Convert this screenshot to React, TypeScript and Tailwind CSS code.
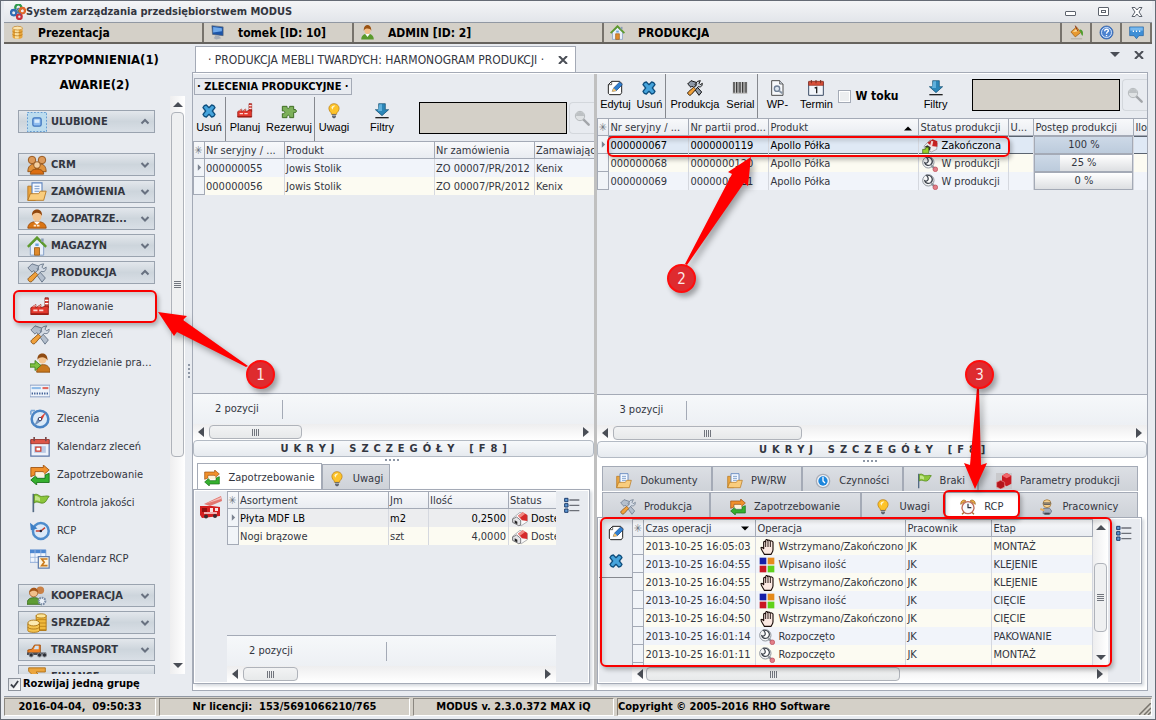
import type { ReactNode } from "react";

type IconName = keyof typeof art;

const art = {
  logo: (
    <g fill="none" strokeWidth="3.500">
      <path d="M9 8a4.500 4.500 0 1 1 8-3c0 3-3 4-5 7" stroke="#2f9a4c" />
      <circle cx="5.500" cy="13" r="4" stroke="#2f6db5" />
      <circle cx="18.500" cy="10" r="4" stroke="#e0662a" />
      <circle cx="14" cy="19" r="3.500" stroke="#c8323c" />
      <path d="M9 11l7 4M13 6l-5 6" stroke="#4a6fa5" strokeWidth="2" />
    </g>
  ),
  db: (
    <g>
      <path d="M4 5v14c0 4 16 4 16 0V5z" fill="#e8a53a" />
      <path d="M8 7v14c2 1 5 1 6 0V7z" fill="#fbe0a0" />
      <ellipse cx="12" cy="5" rx="8" ry="3" fill="#fbe5b0" stroke="#b9781c" />
      <path d="M4 10c2 3 14 3 16 0M4 15c2 3 14 3 16 0" fill="none" stroke="#a9690f" />
    </g>
  ),
  monitor: (
    <g>
      <path d="M3 1l18 2v14L4 15z" fill="#1d55a8" stroke="#59626f" />
      <path d="M5 3l14 2v5L5 12z" fill="#6fa9ea" />
      <path d="M9 16l5 1 4 4-8 2-4-2z" fill="#a7adb5" />
    </g>
  ),
  user: (
    <g>
      <path d="M2 23c0-6 4-9 10-9s10 3 10 9z" fill="#5a9a2c" />
      <path d="M8 14l4 5 4-5z" fill="#fff" />
      <ellipse cx="12" cy="8" rx="5" ry="6.500" fill="#f2bd87" />
      <path d="M6 9c-1-12 13-12 12 0-1-4-10-5-12 0z" fill="#9a5212" />
    </g>
  ),
  house: (
    <g>
      <path d="M4 11v12h16V11l-8-7z" fill="#e9f0fa" stroke="#7694c0" />
      <path d="M1 13L12 2l11 11" fill="none" stroke="#5e9a2e" strokeWidth="3" />
      <path d="M17 3h3v4h-3z" fill="#8a9bb5" />
      <path d="M9 14h6v9H9z" fill="#e08a2c" stroke="#9b5a12" />
      <path d="M10 9h4v3h-4z" fill="#6aa5dd" />
    </g>
  ),
  bucket: (
    <g>
      <path d="M3 21h18v2H3z" fill="#b8b4aa" />
      <path d="M3 11l9-8 7 9-9 7z" fill="#e89a30" stroke="#8e5410" />
      <path d="M6 11l6-5 3 4z" fill="#fde1a2" />
      <path d="M10 1l4 9" stroke="#8a2f12" strokeWidth="1.500" />
      <path d="M17 7c5 0 6 4 5 10-3 0-2-6-5-7z" fill="#4e9c2a" />
    </g>
  ),
  help: (
    <g>
      <circle cx="12" cy="12" r="10.500" fill="#4b82d0" stroke="#23549b" />
      <circle cx="12" cy="12" r="8" fill="none" stroke="#dce9fb" strokeWidth="1.500" />
      <path d="M9 10c0-4 6-4 6-1 0 2-3 2-3 5M12 16v2" fill="none" stroke="#fff" strokeWidth="2.200" />
    </g>
  ),
  chat: (
    <g>
      <path d="M1 3h22v14h-7l-4 5-4-5H1z" fill="#3f8fd6" stroke="#1f5f9f" />
      <path d="M2 4h20v5H2z" fill="#79b9ee" />
      <path d="M6 10h2M11 10h2M16 10h2" stroke="#fff" strokeWidth="2.500" />
    </g>
  ),
  remove: (
    <path
      d="M5 4l3-1 4 4 4-4 3 1 2 3-4 5 4 5-2 3-3 1-4-4-4 4-3-1-2-3 4-5-4-5z"
      fill="#46a4dc"
      stroke="#0f4f7e"
      strokeWidth="2"
      strokeLinejoin="round"
    />
  ),
  factory: (
    <g>
      <path d="M18 1h4v12h-4z" fill="#e0473c" stroke="#8f1a12" />
      <path d="M18 4h4M18 8h4" stroke="#fff" strokeWidth="1.500" />
      <path d="M1 21V13l6-4v4l6-4v4l5-2h4v10z" fill="#e2382d" stroke="#8f1a12" />
      <path d="M2 12l5-3v2zM9 12l4-3v2z" fill="#f7b3ab" />
      <path d="M4 16h5M11 16h5" stroke="#fbd7d2" strokeWidth="2" />
      <path d="M1 20.500h21" stroke="#9c1d15" strokeWidth="2" />
    </g>
  ),
  puzzle: (
    <path
      d="M2 5h7c-1 4 5 4 4 0h6v5c5-2 6 6 0 4v8h-6c1-5-5-5-4 0H2v-6c5 1 5-5 0-4z"
      fill="#7db05a"
      stroke="#3f6e25"
      strokeWidth="1.500"
    />
  ),
  bulb: (
    <g>
      <path d="M8 15C1 9 5 1 12 1s11 8 4 14v2H8z" fill="#fdc32a" stroke="#b3770b" />
      <path d="M8 7c1-3 4-4 6-3-2 1-4 3-4 6z" fill="#fff7cc" />
      <path d="M9 17h6v4l-2 2h-2l-2-2z" fill="#5a5f69" />
      <path d="M9 19h6" stroke="#dfe3ea" />
    </g>
  ),
  download: (
    <g>
      <path d="M7 1h10v9h5L12 19 2 10h5z" fill="#2b86b8" stroke="#124c6e" />
      <path d="M8 2h4v10H6z" fill="#5fb0dc" />
      <path d="M2 22h20" stroke="#222" strokeWidth="2" />
    </g>
  ),
  search: (
    <g>
      <path d="M14 14l8 8" stroke="#a2a5a9" strokeWidth="3.500" strokeLinecap="round" />
      <circle cx="9" cy="9" r="7" fill="#dfe2e4" stroke="#b6babd" strokeWidth="1.500" />
      <path d="M3 9a6 6 0 0 1 12 0z" fill="#bdc1c4" />
    </g>
  ),
  edit: (
    <g>
      <path d="M7 2h12l3 3v14l-2 3H4l-2-2V7z" fill="#fff" stroke="#222" strokeWidth="1.500" />
      <path d="M7 2v5H2" fill="none" stroke="#222" />
      <path d="M8 17l2-5L19 3l4 4-9 9z" fill="#2f7fd0" stroke="#123f78" />
      <path d="M7 18l3-6 4 4z" fill="#f5c06a" />
    </g>
  ),
  tools: (
    <g>
      <path d="M1 6l5-5 9 3-3 3 10 11-4 5L8 9 6 11z" fill="#b4bfcd" stroke="#5d6c80" />
      <path d="M16 2l4-1-2 4 2 2 3-2c0 5-3 6-6 5L6 22c-3 2-6-2-4-4L14 8c-1-3 0-5 2-6z" fill="#d5dce6" stroke="#5d6c80" />
      <path d="M2 18l8-7 3 3-7 8c-3 2-6-2-4-4z" fill="#f0a13c" stroke="#9d5c12" />
    </g>
  ),
  toolsDark: (
    <g>
      <path d="M1 6l5-5 9 3-3 3 10 11-4 5L8 9 6 11z" fill="#8e99a8" stroke="#111" strokeWidth="1.500" />
      <path d="M16 2l4-1-2 4 2 2 3-2c0 5-3 6-6 5L6 22c-3 2-6-2-4-4L14 8c-1-3 0-5 2-6z" fill="#ced6e0" stroke="#111" strokeWidth="1.500" />
      <path d="M2 18l8-7 3 3-7 8c-3 2-6-2-4-4z" fill="#f0a13c" stroke="#4c2c08" />
    </g>
  ),
  barcode: (
    <g>
      <path d="M1 3h22v18H1z" fill="#c4c4c4" />
      <path d="M3 3v16M7 3v16M12 3v16M16 3v16M21 3v16" stroke="#3b3b3b" strokeWidth="2" />
      <path d="M9.500 3v16M18.500 3v16" stroke="#777" />
    </g>
  ),
  docGear: (
    <g>
      <path d="M4 1h12l5 5v17H4z" fill="#f6f8fb" stroke="#333" strokeWidth="1.300" />
      <path d="M16 1v5h5" fill="#cdd5df" stroke="#333" />
      <circle cx="12" cy="13" r="4" fill="#dbe5f0" stroke="#6e7f96" strokeWidth="2" />
      <path d="M15 16l5 4" stroke="#8996a6" strokeWidth="3" />
    </g>
  ),
  date: (
    <g>
      <path d="M1 3h22v20H1z" fill="#f3f6fb" stroke="#3c4c66" strokeWidth="1.500" />
      <path d="M1 2h22v6H1z" fill="#d9503a" stroke="#8e2a1a" />
      <path d="M5 0v5M12 0v5M19 0v5" stroke="#7a2a1c" strokeWidth="1.500" />
      <path d="M10 12l3-1v9" fill="none" stroke="#222" strokeWidth="2" />
    </g>
  ),
  pack: (
    <g>
      <path d="M1 11l11-9 11 5v9l-9 6-13-5z" fill="#fafafa" stroke="#8d8d92" />
      <path d="M9 7l7-5 7 4v9l-8-1z" fill="#d52b2b" />
      <path d="M9 7l7-5 4 2-8 6z" fill="#f08a84" />
      <path d="M1 12l6-3 6 5v7l-3 1-9-5z" fill="#e4e4e6" stroke="#4a4a4e" />
      <path d="M4 14l4 2v4l-4-2z" fill="#222" />
    </g>
  ),
  packDone: (
    <g>
      <path d="M3 12l9-9 11 5-1 9-8 4-10-5z" fill="#ececee" stroke="#8d8d92" />
      <path d="M8 7l8-5 7 3v8l-9-1z" fill="#c92222" />
      <path d="M14 4l3 1-2 8-3-1z" fill="#f6d6d4" />
      <path d="M4 13l4-2 5 3-1 5z" fill="#333" />
      <path d="M1 17h4l1-3h4v9H1z" fill="#9ad02a" stroke="#3b6508" />
    </g>
  ),
  wrench: (
    <g>
      <circle cx="9.500" cy="9.500" r="8.500" fill="#f4f5f6" stroke="#8f959d" strokeWidth="1.500" />
      <path d="M7 2c8-1 11 7 6 11-4 2-8 1-9-3 4 2 8-2 3-8z" fill="#fff" stroke="#3d434c" strokeWidth="1.800" />
      <path d="M14 14l5 5" stroke="#8f959d" strokeWidth="3.500" />
      <circle cx="20" cy="20" r="3.500" fill="#e27f88" stroke="#ba4653" />
    </g>
  ),
  favorite: (
    <g>
      <path d="M0 0h24v24H0z" fill="#bcdcee" />
      <path d="M.5.5h23v23H.5z" fill="none" stroke="#4a86c8" strokeDasharray="2 2" />
      <rect x="7" y="7" width="10" height="10" rx="2" fill="#8fbdf0" stroke="#3f75bd" strokeWidth="1.500" />
      <path d="M9 9h6v4H9z" fill="#d9ebfc" />
    </g>
  ),
  people: (
    <g stroke="#8c4b10">
      <circle cx="6" cy="6" r="4.500" fill="#dc9a5a" />
      <circle cx="18" cy="6" r="4.500" fill="#dc9a5a" />
      <path d="M1 20c0-7 4-9 7-9s6 3 6 9zM10 20c0-7 4-9 7-9s6 3 6 9z" fill="#e0933d" />
      <circle cx="12" cy="12" r="4" fill="#f4d0a2" />
      <path d="M4 23c0-4 3-6 8-6s8 2 8 6z" fill="#dc6d10" />
    </g>
  ),
  folder: (
    <g>
      <path d="M1 5h7l2 3v14H1z" fill="#eaa540" stroke="#b4721a" />
      <path d="M6 1h12v16H6z" fill="#f5f9ff" stroke="#5d83bd" strokeWidth="1.300" />
      <path d="M9 5h6M9 8h6M9 11h6" stroke="#6f93c6" strokeWidth="1.300" />
      <path d="M4 14h10l2-3h7l-3 11H1z" fill="#f9cd7e" stroke="#b4721a" />
    </g>
  ),
  agent: (
    <g>
      <path d="M1 23c0-5 4-8 11-8s11 3 11 8z" fill="#d97414" stroke="#96480a" />
      <ellipse cx="12" cy="8" rx="5.500" ry="7" fill="#f4c592" />
      <path d="M6 8C5-2 19-2 18 8c-2-4-9-5-12 0z" fill="#92480f" />
      <path d="M8 15l4 4 4-4z" fill="#fff" />
      <path d="M8 20h8" stroke="#fde8cf" strokeWidth="2" strokeDasharray="3 1" />
    </g>
  ),
  assign: (
    <g>
      <path d="M8 23c0-6 3-9 8-9s8 3 8 9z" fill="#c9781d" stroke="#8a4c0c" />
      <ellipse cx="15" cy="7" rx="5" ry="6" fill="#f4c592" />
      <path d="M9 8C8-2 22-2 21 9c-1-4-9-6-12-1z" fill="#8f4c14" />
      <path d="M0 13h6v-4l7 6-7 6v-4H0z" fill="#7fc142" stroke="#3c7d17" />
    </g>
  ),
  machine: (
    <g>
      <path d="M0 5h24v14H0z" fill="#eef3fa" stroke="#7b93bd" />
      <path d="M2 8.500h11" stroke="#8fbbe8" strokeWidth="2.500" />
      <path d="M15 8.500h7" stroke="#e0685f" strokeWidth="2.500" />
      <path d="M2 15h20" stroke="#35568f" strokeWidth="2.500" strokeDasharray="1.500 1.500" />
    </g>
  ),
  compass: (
    <g>
      <circle cx="12" cy="12" r="10" fill="#ddebf8" stroke="#4a84c4" strokeWidth="3" />
      <path d="M19 4l-5 10-3-3z" fill="#e0402c" />
      <path d="M5 20l5-10 4 4z" fill="#7392ba" />
      <circle cx="12" cy="12" r="2" fill="#fff" stroke="#335" />
      <path d="M1 2h5M1 2v5" stroke="#79a7d8" strokeWidth="2" />
    </g>
  ),
  calendar: (
    <g>
      <path d="M1 4h22v19H1z" fill="#edf2fb" stroke="#5c77a8" strokeWidth="1.500" />
      <path d="M1 3h22v5H1z" fill="#dd5548" stroke="#9c2f24" />
      <path d="M5 0v5M19 0v5" stroke="#7a4a4a" strokeWidth="2" />
      <path d="M5 11h14v8H5z" fill="#b9c8e4" />
      <path d="M7 12h6v5H7z" fill="#fff" stroke="#cf3a2c" strokeWidth="1.500" />
    </g>
  ),
  cycle: (
    <g>
      <path d="M1 14V3h15V0l7 6-7 6V8H6v4z" fill="#f0902c" stroke="#9a4d0b" />
      <path d="M23 10v11H8v3l-7-6 7-6v4h10v-4z" fill="#35b02f" stroke="#156b13" />
      <path d="M7 9h10v5H7z" fill="#fff3d8" />
    </g>
  ),
  flag: (
    <g>
      <path d="M4 1v22" stroke="#546b84" strokeWidth="2" />
      <path d="M5 2c5-2 6 3 10 2 3 0 5-1 8 0-3 3-3 7-7 8-4 1-7-3-11 0z" fill="#8cc63c" stroke="#4d8414" />
      <path d="M6 4c3-1 4 1 6 2v4c-2-1-4-2-6-1z" fill="#c3e58b" />
    </g>
  ),
  history: (
    <g>
      <circle cx="13" cy="12" r="9.500" fill="#dbe9f8" stroke="#4e8ccc" strokeWidth="3" />
      <path d="M0 2l1 9 8-2z" fill="#3d7fc6" />
      <path d="M7 12h6l5-4" fill="none" stroke="#c8402e" strokeWidth="1.800" />
      <circle cx="13" cy="12" r="1.500" fill="#223" />
    </g>
  ),
  tableSum: (
    <g>
      <path d="M0 1h19v15H0z" fill="#f0f5fc" stroke="#7ea0d2" />
      <path d="M0 1h19v4H0z" fill="#4d88d2" />
      <path d="M6 1v15M13 1v15M0 10h19" stroke="#9db8de" />
      <path d="M10 9h13v14H10z" fill="#fdf4e0" stroke="#5f7dae" strokeWidth="1.500" />
      <path d="M20 13v-1h-6l3 4-3 4h6v-1" fill="none" stroke="#c97a1c" strokeWidth="2" />
    </g>
  ),
  team: (
    <g>
      <circle cx="16" cy="5" r="4.500" fill="#c98146" />
      <circle cx="8" cy="8" r="5" fill="#f1c08b" stroke="#a45d20" />
      <path d="M3 8c0-8 11-8 10 0-3-3-7-3-10 0z" fill="#a4561a" />
      <path d="M0 22c0-6 3-8 9-8 5 0 8 3 8 8z" fill="#5e9c34" stroke="#38691a" />
      <circle cx="18" cy="18" r="4" fill="#eaf0f7" stroke="#7b8da8" strokeWidth="2.500" strokeDasharray="2 1" />
    </g>
  ),
  coins: (
    <g stroke="#a8700c">
      <path d="M11 3v18h12V3z" fill="#f0b93c" />
      <ellipse cx="17" cy="3.500" rx="6" ry="2.500" fill="#fde597" />
      <path d="M11 8h12M11 12h12M11 16h12M11 20h12" stroke="#b97f16" />
      <path d="M1 13v8c0 3 14 3 14 0v-8z" fill="#f4c350" />
      <ellipse cx="8" cy="12" rx="7" ry="3.500" fill="#fdeab0" />
      <path d="M1 17c1 3 13 3 14 0" fill="none" />
    </g>
  ),
  truck: (
    <g>
      <path d="M1 12l5-1 3-5h7v10H1z" fill="#ee8124" stroke="#9c4a0a" />
      <path d="M10 7h4v4H8z" fill="#cfe2f2" />
      <path d="M0 15h23v3H0z" fill="#4a4f58" />
      <g fill="#2c2f36" stroke="#8b9099">
        <circle cx="5" cy="18" r="2.500" />
        <circle cx="15" cy="18" r="2.500" />
        <circle cx="21" cy="18" r="2.500" />
      </g>
    </g>
  ),
  sigma: <path d="M2 1h20v5H11l6 7-6 6h11v4H2v-3l8-7-8-8z" fill="#eba53e" stroke="#a9690f" />,
  crane: (
    <g>
      <path d="M5 9L22 1l1 5-12 5z" fill="#e2756e" />
      <path d="M6 9l16-7v2z" fill="#f6bdb8" />
      <path d="M1 11h12l8 1v9l-18 2-2-3z" fill="#d31f1f" />
      <path d="M3 13h5v4H3z" fill="#8e1010" />
      <path d="M11 13h3v4h-3zM16 13h3v3h-3z" fill="#f9e3e3" />
      <path d="M5 18h13" stroke="#fff" strokeWidth="1.300" />
      <g fill="#3a2a2e">
        <circle cx="7" cy="21.500" r="2" />
        <circle cx="16" cy="21" r="2" />
      </g>
    </g>
  ),
  list: (
    <g>
      <path d="M1 2h5v5H1zM1 10h5v5H1zM1 18h5v5H1z" fill="#5f9bd8" stroke="#1e3d6b" strokeWidth="1.500" />
      <path d="M8 4.500h15M8 12.500h15M8 20.500h15" stroke="#6c7078" strokeWidth="2" />
    </g>
  ),
  hand: (
    <g>
      <path
        d="M8 23c-2-4-5-7-5-10 2-1 3 0 4 2V5c0-2 3-2 3 0V3c0-3 3-3 3 0 0-2 4-2 4 1 0-2 4-1 4 1v11c0 3-2 5-3 7z"
        fill="#fbe9e2"
        stroke="#1b0d0a"
        strokeWidth="1.700"
      />
      <path d="M10 4v8M13.500 3v9M17 4v8" stroke="#1b0d0a" strokeWidth="1.400" />
    </g>
  ),
  squares: (
    <g>
      <path d="M1 1h10v10H1z" fill="#1520a8" />
      <path d="M13 1h10v10H13z" fill="#e58a1c" />
      <path d="M1 13h10v10H1z" fill="#c91822" />
      <path d="M13 13h10v10H13z" fill="#5fd11c" />
    </g>
  ),
  alarm: (
    <g>
      <path d="M3 23l4-4M21 23l-4-4" stroke="#a8702a" strokeWidth="2" />
      <path d="M1 8c0-6 5-8 8-5zM23 8c0-6-5-8-8-5z" fill="#eaaa45" stroke="#9b6218" />
      <circle cx="12" cy="13" r="9" fill="#f7f9fc" stroke="#c06a58" strokeWidth="2" />
      <path d="M12 7v6h5" fill="none" stroke="#2b3340" strokeWidth="1.800" />
    </g>
  ),
  clock: (
    <g>
      <circle cx="12" cy="12" r="10" fill="#f3f6fa" stroke="#a9aeb8" strokeWidth="2" />
      <circle cx="12" cy="12" r="7" fill="#1d86dc" />
      <path d="M12 6v6l3 3" fill="none" stroke="#fff" strokeWidth="2" />
    </g>
  ),
  cubes: (
    <g>
      <path d="M0 0h24v24H0z" fill="#c9c9cc" />
      <path d="M9 4l7-4 7 4v12l-7 4-7-4z" fill="#c81a22" />
      <path d="M9 4l7-4 7 4-7 4z" fill="#f0666a" />
      <path d="M1 14l6-3 6 3v7l-6 3-6-3z" fill="#b3141b" stroke="#f08b8d" />
    </g>
  ),
  worker: (
    <g>
      <circle cx="12" cy="7" r="6" fill="#f5cf8e" stroke="#9a6a24" />
      <path d="M6 6h12M7 8h10" stroke="#4b4f58" strokeWidth="1.500" />
      <path d="M7 14h9l3 4-2 4H6z" fill="#a3adbd" stroke="#5a6475" />
      <path d="M2 15l6 2" stroke="#e8b060" strokeWidth="3" />
      <path d="M8 22h8" stroke="#40454e" strokeWidth="3" />
    </g>
  ),
};

function Icon({ name, className = "size-5" }: { name: IconName; className?: string }) {
  return (
    <svg viewBox="0 0 24 24" aria-hidden="true" className={`shrink-0 ${className}`}>
      {art[name]}
    </svg>
  );
}

function Arrow({ dir, className = "size-[10px] fill-[#4a4e56]" }: { dir: "left" | "right" | "up" | "down"; className?: string }) {
  const d = { left: "M8 0v10L2 5z", right: "M2 0v10l6-5z", up: "M0 8h10L5 3z", down: "M0 2h10L5 7z" }[dir];
  return (
    <svg viewBox="0 0 10 10" aria-hidden="true" className={`shrink-0 ${className}`}>
      <path d={d} />
    </svg>
  );
}

function StatusCell({ icon, label, className }: { icon: IconName; label: string; className: string }) {
  return (
    <div className={`flex items-center border-r-2 border-[#77736c] pl-1.5 font-bold text-black ${className}`}>
      <Icon name={icon} className="size-[15px]" />
      <span className="truncate pl-[13px] text-xs">{label}</span>
    </div>
  );
}

function BarButton({ icon, label }: { icon: IconName; label: string }) {
  return (
    <button aria-label={label} className="flex w-[30px] items-center justify-center border-r-2 border-[#77736c]">
      <Icon name={icon} className="size-[15px]" />
    </button>
  );
}

function GroupButton({ icon, label, open = false, className = "" }: { icon: IconName; label: string; open?: boolean; className?: string }) {
  return (
    <button
      className={`flex h-[23px] w-full shrink-0 items-center border border-[#9aa3af] bg-linear-to-b from-[#e3e7ec] via-[#cdd5dc] to-[#d9dfe6] px-2 font-bold text-[#33363f] ${className}`}
    >
      <Icon name={icon} />
      <span className="flex-1 pl-1 text-left">{label}</span>
      <svg viewBox="0 0 10 10" aria-hidden="true" className="mr-[-4px] size-[10px]" fill="none" stroke="#687180" strokeWidth="2">
        <path d={open ? "M1.500 6.500L5 3l3.500 3.500" : "M1.500 3L5 6.500 8.500 3"} />
      </svg>
    </button>
  );
}

const productionItems: [IconName, string][] = [
  ["factory", "Planowanie"],
  ["tools", "Plan zleceń"],
  ["assign", "Przydzielanie pra…"],
  ["machine", "Maszyny"],
  ["compass", "Zlecenia"],
  ["calendar", "Kalendarz zleceń"],
  ["cycle", "Zapotrzebowanie"],
  ["flag", "Kontrola jakości"],
  ["history", "RCP"],
  ["tableSum", "Kalendarz RCP"],
];

function Sidebar() {
  return (
    <aside className="flex w-[181px] shrink-0 flex-col pb-0.5">
      <div className="flex h-[50px] flex-col items-center gap-[7px] pt-[5px] text-[13px] leading-[18px] font-bold text-black">
        <a href="#przypomnienia">PRZYPOMNIENIA(1)</a>
        <a href="#awarie">AWARIE(2)</a>
      </div>
      <div className="flex min-h-0 flex-1">
        <nav className="min-h-0 flex-1 overflow-hidden pt-[14px] pr-[15px] pl-[14px]">
          <GroupButton icon="favorite" label="ULUBIONE" open className="mb-5" />
          <div className="flex flex-col gap-1">
            <GroupButton icon="people" label="CRM" />
            <GroupButton icon="folder" label="ZAMÓWIENIA" />
            <GroupButton icon="agent" label="ZAOPATRZE..." />
            <GroupButton icon="house" label="MAGAZYN" />
            <GroupButton icon="tools" label="PRODUKCJA" open />
          </div>
          <ul className="pt-[9px] pb-[11px]">
            {productionItems.map(([icon, label]) => (
              <li key={label}>
                <a href="#produkcja" className="flex h-7 items-center gap-[7px] pl-3 whitespace-nowrap">
                  <Icon name={icon} />
                  {label}
                </a>
              </li>
            ))}
          </ul>
          <div className="flex flex-col gap-1">
            <GroupButton icon="team" label="KOOPERACJA" />
            <GroupButton icon="coins" label="SPRZEDAŻ" />
            <GroupButton icon="truck" label="TRANSPORT" />
            <GroupButton icon="sigma" label="FINANSE" />
          </div>
        </nav>
        <VScroll thumb="h-[345px]" />
      </div>
      <label className="flex h-5 items-center gap-1 pl-1 font-bold text-black">
        <input
          type="checkbox"
          defaultChecked
          className="size-[13px] appearance-none border border-[#8d939c] bg-white checked:bg-linear-to-br checked:from-[#dcdfe4] checked:to-white"
        />
        <svg viewBox="0 0 10 10" aria-hidden="true" className="-ml-[15px] size-[9px]" fill="none" stroke="#3c4048" strokeWidth="2">
          <path d="M1 5l3 3 5-7" />
        </svg>
        Rozwijaj jedną grupę
      </label>
    </aside>
  );
}

function VScroll({ thumb, space = "" }: { thumb: string; space?: string }) {
  return (
    <div className="flex w-[15px] shrink-0 flex-col items-center bg-linear-to-r from-[#eeeeef] to-white">
      <div className="flex h-4 items-center">
        <Arrow dir="up" />
      </div>
      <div className={`flex min-h-0 w-[13px] flex-1 flex-col ${space}`}>
        <div className={`flex flex-col items-center justify-center gap-px rounded-sm border border-[#afb3ba] bg-[#eff0f1] ${thumb}`}>
          {[0, 1, 2, 3].map((n) => (
            <i key={n} className="block h-px w-[7px] bg-[#71757d]" />
          ))}
        </div>
      </div>
      <div className="flex h-4 items-center">
        <Arrow dir="down" />
      </div>
    </div>
  );
}

function HScroll({ thumb }: { thumb: string }) {
  return (
    <div className="flex h-4 shrink-0 items-center bg-linear-to-b from-[#eeeeef] to-white px-[3px]">
      <Arrow dir="left" />
      <div className="mx-[3px] flex flex-1">
        <div className={`flex h-[14px] items-center justify-center gap-px rounded-sm border border-[#afb3ba] bg-linear-to-b from-[#f2f3f4] to-[#e7e9ea] ${thumb}`}>
          {[0, 1, 2, 3].map((n) => (
            <i key={n} className="block h-[7px] w-px bg-[#71757d]" />
          ))}
        </div>
      </div>
      <Arrow dir="right" />
    </div>
  );
}

function Summary({ label, width = "w-[67px]" }: { label: string; width?: string }) {
  return (
    <div className="flex h-[31px] shrink-0 items-center border-t border-[#a4aab6] bg-linear-to-b from-[#f6f8fa] to-[#edf0f4] pl-[22px]">
      <span className={width}>{label}</span>
      <i className="h-[19px] w-px bg-[#a4aab6]" />
    </div>
  );
}

function ToolButton({ icon, label, className, sep = false }: { icon: IconName; label: string; className: string; sep?: boolean }) {
  return (
    <button
      className={`flex h-full shrink-0 flex-col items-center gap-px pt-1.5 font-['Liberation_Sans',sans-serif] text-[11px] leading-[14px] text-black ${sep ? "border-r border-[#85888e]" : ""} ${className}`}
    >
      <Icon name={icon} className="size-4" />
      {label}
    </button>
  );
}

function FilterBox({ label }: { label: string }) {
  return (
    <>
      <input aria-label={label} className="h-8 w-[148px] shrink-0 border border-black bg-[#d4d0c8] px-1" />
      <button aria-label="Szukaj" className="ml-[2px] flex h-8 min-w-0 flex-1 items-center justify-center rounded-l border border-r-0 border-[#d3d7dc]">
        <Icon name="search" className="size-4" />
      </button>
    </>
  );
}

const detailsLabel = "U K R Y J   S Z C Z E G Ó Ł Y   [ F 8 ]".replace(/ /g, "\u2002");

function DetailsButton() {
  return (
    <button className="h-[17px] shrink-0 rounded-sm border border-[#b3bac4] bg-linear-to-b from-[#f7f9fb] to-[#e6eaef] leading-[15px] font-bold whitespace-pre text-[#33363f]">
      {detailsLabel}
    </button>
  );
}

function Dots() {
  return (
    <div className="flex h-1.5 shrink-0 items-center justify-center gap-[2px]">
      {[0, 1, 2, 3].map((n) => (
        <i key={n} className="size-[2px] bg-[#8f98a6]" />
      ))}
    </div>
  );
}

function Th({ children, className = "pl-px" }: { children?: ReactNode; className?: string }) {
  return (
    <th className={`h-[18px] overflow-hidden border-y border-r border-[#a4aab6] bg-linear-to-b from-[#f8f9fb] to-[#e9ecf1] pt-px text-left leading-[15px] font-normal whitespace-nowrap ${className}`}>
      {children}
    </th>
  );
}

function Td({ children, className = "pl-px" }: { children?: ReactNode; className?: string }) {
  return <td className={`h-[18px] overflow-hidden border-r border-[#d5d8df] pt-px leading-[17px] whitespace-nowrap ${className}`}>{children}</td>;
}

function Marker({ active = false }: { active?: boolean }) {
  return (
    <td className="h-[18px] border border-t-0 border-[#a4aab6] bg-[#f1f4f8] p-0">
      {active && (
        <svg viewBox="0 0 6 8" aria-hidden="true" className="mx-auto h-[7px] w-[5px] fill-[#7b8290]">
          <path d="M1 0v8l4-4z" />
        </svg>
      )}
    </td>
  );
}

function StarTh() {
  return <Th className="border-l text-center text-[#6d7480]">✳</Th>;
}

const tableClass = "w-full table-fixed border-separate border-spacing-0";

function OrdersTable() {
  return (
    <table className={tableClass}>
      <colgroup>
        <col className="w-[12px]" />
        <col className="w-[80px]" />
        <col className="w-[150px]" />
        <col className="w-[100px]" />
        <col />
      </colgroup>
      <thead>
        <tr>
          <StarTh />
          <Th>Nr seryjny / ...</Th>
          <Th>Produkt</Th>
          <Th>Nr zamówienia</Th>
          <Th className="border-r-0 pl-px">Zamawiający</Th>
        </tr>
      </thead>
      <tbody>
        {["000000055", "000000056"].map((nr, i) => (
          <tr key={nr} className={i ? "bg-[#fcfbf2]" : "bg-[#f1f4fa]"}>
            <Marker active={i === 0} />
            <Td>{nr}</Td>
            <Td>Jowis Stolik</Td>
            <Td>ZO 00007/PR/2012</Td>
            <Td className="border-r-0 pl-px">Kenix</Td>
          </tr>
        ))}
      </tbody>
    </table>
  );
}

const batches: [string, string, IconName, string, number][] = [
  ["000000067", "0000000119", "packDone", "Zakończona", 100],
  ["000000068", "0000000120", "wrench", "W produkcji", 25],
  ["000000069", "0000000121", "wrench", "W produkcji", 0],
];

function BatchesTable() {
  return (
    <table className={tableClass}>
      <colgroup>
        <col className="w-[12px]" />
        <col className="w-[80px]" />
        <col className="w-[80px]" />
        <col className="w-[150px]" />
        <col className="w-[90px]" />
        <col className="w-[25px]" />
        <col className="w-[100px]" />
        <col />
      </colgroup>
      <thead>
        <tr>
          <StarTh />
          <Th>Nr seryjny / ...</Th>
          <Th>Nr partii prod...</Th>
          <Th>
            <span className="flex items-center justify-between pr-1.5">
              Produkt
              <Arrow dir="up" className="size-[8px] fill-black" />
            </span>
          </Th>
          <Th>Status produkcji</Th>
          <Th>U...</Th>
          <Th>Postęp produkcji</Th>
          <Th className="border-r-0 pl-px">Ilość</Th>
        </tr>
      </thead>
      <tbody>
        {batches.map(([nr, lot, icon, status, pct], i) => {
          const cell = i === 0 ? "pl-px shadow-[inset_0_1px_0_#5b6470,inset_0_-1px_0_#5b6470]" : "pl-px";
          return (
            <tr key={nr} className={i === 0 ? "bg-[#dfe9f5] text-black" : i === 1 ? "bg-[#fcfbf2]" : "bg-[#f1f4fa]"}>
              <Marker active={i === 0} />
              <Td className={cell}>{nr}</Td>
              <Td className={cell}>{lot}</Td>
              <Td className={cell}>Apollo Półka</Td>
              <Td className={cell}>
                <span className="flex h-[17px] items-center gap-[3px] pl-[2px]">
                  <Icon name={icon} className="size-4" />
                  {status}
                </span>
              </Td>
              <Td className={cell} />
              <td className="h-[18px] border-r border-[#d5d8df] p-0">
                <div className="relative h-[18px] border border-[#a4aab6] bg-linear-to-b from-white to-[#dddfe2] text-center leading-4 text-[#33363f]">
                  <div className="absolute inset-y-0 left-0 bg-linear-to-b from-[#cdd9e7] to-[#bccbdc]" style={{ width: `${pct}%` }} />
                  <span className="relative">{pct} %</span>
                </div>
              </td>
              <Td className={`border-r-0 ${cell}`} />
            </tr>
          );
        })}
      </tbody>
    </table>
  );
}

function DemandTable() {
  const rows = [
    ["Płyta MDF LB", "m2", "0,2500"],
    ["Nogi brązowe", "szt", "4,0000"],
  ];
  return (
    <table className={tableClass}>
      <colgroup>
        <col className="w-[12px]" />
        <col className="w-[150px]" />
        <col className="w-[40px]" />
        <col className="w-[80px]" />
        <col />
      </colgroup>
      <thead>
        <tr>
          <StarTh />
          <Th>Asortyment</Th>
          <Th>Jm</Th>
          <Th>Ilość</Th>
          <Th className="border-r-0 pl-px">Status</Th>
        </tr>
      </thead>
      <tbody>
        {rows.map(([name, unit, qty], i) => (
          <tr key={name} className={i ? "bg-[#fcfbf2]" : "bg-[#ecedef] text-black"}>
            <Marker active={i === 0} />
            <Td>{name}</Td>
            <Td>{unit}</Td>
            <Td className="pr-[2px] text-right">{qty}</Td>
            <Td className="border-r-0 pl-px">
              <span className="flex h-[17px] items-center gap-[3px] pl-[2px]">
                <Icon name="pack" className="size-4" />
                Dostępny
              </span>
            </Td>
          </tr>
        ))}
      </tbody>
    </table>
  );
}

const operations: [string, IconName, string, string, string][] = [
  ["2013-10-25 16:05:03", "hand", "Wstrzymano/Zakończono", "JK", "MONTAŻ"],
  ["2013-10-25 16:04:55", "squares", "Wpisano ilość", "JK", "KLEJENIE"],
  ["2013-10-25 16:04:55", "hand", "Wstrzymano/Zakończono", "JK", "KLEJENIE"],
  ["2013-10-25 16:04:50", "squares", "Wpisano ilość", "JK", "CIĘCIE"],
  ["2013-10-25 16:04:50", "hand", "Wstrzymano/Zakończono", "JK", "CIĘCIE"],
  ["2013-10-25 16:01:14", "wrench", "Rozpoczęto", "JK", "PAKOWANIE"],
  ["2013-10-25 16:01:11", "wrench", "Rozpoczęto", "JK", "MONTAŻ"],
  ["", "wrench", "", "", ""],
];

function OperationsTable() {
  return (
    <table className={tableClass}>
      <colgroup>
        <col className="w-[12px]" />
        <col className="w-[112px]" />
        <col className="w-[150px]" />
        <col className="w-[86px]" />
        <col />
      </colgroup>
      <thead>
        <tr>
          <StarTh />
          <Th>
            <span className="flex items-center justify-between pr-1.5">
              Czas operacji
              <Arrow dir="down" className="size-[8px] fill-black" />
            </span>
          </Th>
          <Th>Operacja</Th>
          <Th>Pracownik</Th>
          <Th>Etap</Th>
        </tr>
      </thead>
      <tbody>
        {operations.map(([time, icon, name, worker, stage], i) => (
          <tr key={i} className={i % 2 ? "bg-[#f1f4fa]" : "bg-[#fcfbf2]"}>
            <Marker />
            <Td>{time}</Td>
            <Td>
              <span className="flex h-[17px] items-center gap-[3px] pl-[2px]">
                <Icon name={icon} className="size-4" />
                {name}
              </span>
            </Td>
            <Td>{worker}</Td>
            <Td>{stage}</Td>
          </tr>
        ))}
      </tbody>
    </table>
  );
}

function Tab({ icon, label, active = false, className = "" }: { icon: IconName; label: string; active?: boolean; className?: string }) {
  return (
    <button
      role="tab"
      aria-selected={active}
      className={`flex items-center justify-center gap-2 border border-b-0 border-[#a4aab6] pt-[3px] whitespace-nowrap ${active ? "h-full bg-white" : "h-[25px] bg-linear-to-b from-[#dcdfe4] to-[#ced2d8]"} ${className}`}
    >
      <Icon name={icon} className="size-4" />
      {label}
    </button>
  );
}

function LeftPane() {
  return (
    <section className="flex min-w-0 flex-[401] flex-col">
      <div className="flex min-h-0 flex-1 flex-col bg-[#e8ebf0]">
        <h2 className="mt-1 ml-px self-start border border-[#a4aab6] px-0.5 leading-[15px] font-bold text-black">· ZLECENIA PRODUKCYJNE ·</h2>
        <div className="mt-[2px] flex h-[44px] shrink-0 items-start">
          <ToolButton icon="remove" label="Usuń" className="w-[33px]" sep />
          <ToolButton icon="factory" label="Planuj" className="w-[38px]" />
          <ToolButton icon="puzzle" label="Rezerwuj" className="w-[51px]" sep />
          <ToolButton icon="bulb" label="Uwagi" className="mr-[10px] w-[38px]" />
          <ToolButton icon="download" label="Filtry" className="mr-[18px] w-[38px]" />
          <div className="flex min-w-0 flex-1 pt-[5px]">
            <FilterBox label="Filtr zleceń" />
          </div>
        </div>
        <OrdersTable />
      </div>
      <Summary label="2 pozycji" />
      <HScroll thumb="w-[93px]" />
      <DetailsButton />
      <div className="flex h-[233px] shrink-0 flex-col bg-white pr-1 pb-1.5">
        <Dots />
        <div role="tablist" className="flex h-[26px] shrink-0 items-end pl-1">
          <Tab icon="cycle" label="Zapotrzebowanie" active className="w-[125px]" />
          <Tab icon="bulb" label="Uwagi" className="w-[68px]" />
        </div>
        <div className="flex min-h-0 flex-1 border border-[#a4aab6] p-px shadow-[2px_2px_3px_#d4d8de]">
          <div className="flex w-8 shrink-0 justify-center bg-[#e8ebf0] pt-1">
            <Icon name="crane" className="size-6" />
          </div>
          <div className="flex min-w-0 flex-1 flex-col bg-[#e8ebf0]">
            <div className="min-h-0 flex-1">
              <DemandTable />
            </div>
            <Summary label="2 pozycji" width="w-[137px]" />
            <HScroll thumb="w-[55px]" />
          </div>
          <div className="flex w-8 shrink-0 justify-center bg-[#e8ebf0] pt-1.5">
            <Icon name="list" className="size-4" />
          </div>
        </div>
      </div>
    </section>
  );
}

function RightPane() {
  return (
    <section className="flex min-w-0 flex-[549] flex-col">
      <div className="flex min-h-0 flex-1 flex-col bg-[#e8ebf0]">
        <div className="flex h-[44px] shrink-0 items-start">
          <ToolButton icon="edit" label="Edytuj" className="w-[36px]" />
          <ToolButton icon="remove" label="Usuń" className="w-[33px]" sep />
          <ToolButton icon="toolsDark" label="Produkcja" className="w-[57px]" />
          <ToolButton icon="barcode" label="Serial" className="w-[35px]" sep />
          <ToolButton icon="docGear" label="WP-" className="w-[38px]" />
          <ToolButton icon="date" label="Termin" className="w-[40px]" />
          <label className="flex h-full items-center gap-1 pl-0.5 text-xs font-bold text-black">
            <input type="checkbox" className="size-[13px] appearance-none border border-[#a4aab6] bg-[#eceef0] ring-1 ring-white ring-inset" />
            W toku
          </label>
          <ToolButton icon="download" label="Filtry" className="mr-[17px] ml-[18px] w-[38px]" />
          <div className="flex min-w-0 flex-1 pt-[5px]">
            <FilterBox label="Filtr partii" />
          </div>
        </div>
        <BatchesTable />
      </div>
      <Summary label="3 pozycji" />
      <HScroll thumb="w-[189px]" />
      <DetailsButton />
      <div className="flex h-[232px] shrink-0 flex-col bg-white pr-[5px] pb-1.5">
        <Dots />
        <div role="tablist" className="mt-[2px] mr-1 ml-[5px] flex h-[26px] shrink-0">
          <Tab icon="folder" label="Dokumenty" className="shrink grow basis-[109px]" />
          <Tab icon="folder" label="PW/RW" className="shrink grow basis-[90px]" />
          <Tab icon="clock" label="Czynności" className="shrink grow basis-[101px]" />
          <Tab icon="flag" label="Braki" className="shrink grow basis-[75px]" />
          <Tab icon="cubes" label="Parametry produkcji" className="shrink grow basis-[160px]" />
        </div>
        <div role="tablist" className="mr-1 ml-[5px] flex h-[25px] shrink-0 items-end">
          <Tab icon="tools" label="Produkcja" className="shrink grow basis-[107px]" />
          <Tab icon="cycle" label="Zapotrzebowanie" className="shrink grow basis-[151px]" />
          <Tab icon="bulb" label="Uwagi" className="shrink grow basis-[84px]" />
          <Tab icon="alarm" label="RCP" active className="shrink grow basis-[74px]" />
          <Tab icon="worker" label="Pracownicy" className="shrink grow basis-[119px]" />
        </div>
        <div className="flex min-h-0 flex-1 border border-[#a4aab6] p-px shadow-[2px_2px_3px_#d4d8de]">
          <div className="flex w-[33px] shrink-0 flex-col items-center bg-[#e8ebf0]">
            <div className="flex w-full flex-col items-center gap-3 border-b border-[#85888e] pt-1.5 pb-2">
              <button aria-label="Edytuj">
                <Icon name="edit" className="size-4" />
              </button>
              <button aria-label="Usuń">
                <Icon name="remove" className="size-4" />
              </button>
            </div>
          </div>
          <div className="flex min-w-0 flex-1 flex-col bg-[#e8ebf0]">
            <div className="flex min-h-0 flex-1">
              <div className="min-h-0 min-w-0 flex-1 overflow-hidden">
                <OperationsTable />
              </div>
              <VScroll thumb="h-[69px]" space="pt-[28px]" />
            </div>
            <HScroll thumb="ml-[-2px] w-[254px]" />
          </div>
          <div className="flex w-8 shrink-0 justify-center bg-[#e8ebf0] pt-1.5">
            <Icon name="list" className="size-4" />
          </div>
        </div>
      </div>
    </section>
  );
}

function Badge({ n, className }: { n: number; className: string }) {
  return (
    <span className={`absolute flex size-[29px] items-center justify-center rounded-full border-2 border-[#ff0d0d] bg-[#de2b2f] text-[15px] text-[#fbe9e9] shadow-[3px_4px_5px_#00000050] ${className}`}>
      {n}
    </span>
  );
}

function Annotations() {
  const box = "absolute rounded-md border-2 border-[#f80000] shadow-[2px_3px_4px_#00000040,inset_2px_3px_4px_#00000022]";
  return (
    <div className="pointer-events-none absolute -inset-px">
      <div className={`top-[290px] left-[13px] h-[33px] w-[144px] ${box}`} />
      <div className={`top-[136px] left-[607px] h-[21px] w-[403px] ${box}`} />
      <div className={`top-[490px] left-[943px] h-[28px] w-[77px] ${box}`} />
      <div className={`top-[517px] left-[600px] h-[150px] w-[512px] ${box}`} />
      <svg viewBox="0 0 1156 720" className="absolute top-0 left-0 h-[720px] w-[1156px] fill-[#ff0000] drop-shadow-[3px_4px_3px_#00000055]">
        <path d="M158 312L187 316L183 320L248 366L246 367L177 332L174 336Z" />
        <path d="M751 157L748 186L744 183L687 265L685 264L732 174L728 172Z" />
        <path d="M975 489L964 463L970 465L977 388L979 388L981 465L987 463Z" />
      </svg>
      <Badge n={1} className="top-[360px] left-[246px]" />
      <Badge n={2} className="top-[264px] left-[667px]" />
      <Badge n={3} className="top-[360px] left-[965px]" />
    </div>
  );
}

export default function App() {
  const foot = "flex h-[18px] items-center border border-[#8b8780] border-r-white border-b-white whitespace-pre";
  return (
    <div className="relative flex h-screen flex-col overflow-hidden border border-[#656b75] bg-[#e8ebf0] px-[3px] pb-[3px] font-['DejaVu_Sans_Condensed','DejaVu_Sans',sans-serif] text-[11px] leading-[14px] text-[#33363f]">
      <header className="flex h-[21px] shrink-0 items-center bg-linear-to-b from-[#f4f5f7] to-[#e2e5ea] pr-[9px] pl-1.5">
        <Icon name="logo" className="size-4" />
        <h1 className="flex-1 font-bold">System zarządzania przedsiębiorstwem MODUS</h1>
        <div className="flex items-center gap-[22px]">
          <button aria-label="Minimalizuj" className="mt-1 h-[5px] w-[11px] rounded-[1px] border border-[#5d636d] bg-white" />
          <button aria-label="Maksymalizuj" className="flex h-[9px] w-[11px] items-center justify-center rounded-[1px] border border-[#5d636d] bg-white">
            <i className="h-[3px] w-[5px] border border-[#5d636d]" />
          </button>
          <button aria-label="Zamknij">
            <svg viewBox="0 0 12 10" className="block h-[10px] w-3" fill="#fff" stroke="#5d636d">
              <path d="M1 .5h3l2 2.500 2-2.500h3L8 5l3 4.500H8L6 7 4 9.500H1L4 5z" />
            </svg>
          </button>
        </div>
      </header>

      <div className="flex h-[22px] shrink-0 border-t border-b-2 border-t-[#9198a3] border-b-[#66635e] bg-[#d4d0c8]">
        <StatusCell icon="db" label="Prezentacja" className="w-[200px]" />
        <StatusCell icon="monitor" label="tomek [ID: 10]" className="w-[150px]" />
        <StatusCell icon="user" label="ADMIN [ID: 2]" className="w-[250px]" />
        <StatusCell icon="house" label="PRODUKCJA" className="min-w-0 flex-1" />
        <BarButton icon="bucket" label="Motyw" />
        <BarButton icon="help" label="Pomoc" />
        <BarButton icon="chat" label="Wiadomości" />
      </div>

      <main className="flex min-h-0 flex-1 pt-[2px]">
        <Sidebar />
        <div className="flex w-[7px] shrink-0 flex-col items-center justify-center gap-[2px]">
          {[0, 1, 2, 3].map((n) => (
            <i key={n} className="size-[2px] bg-[#8f98a6]" />
          ))}
        </div>
        <div className="flex min-w-0 flex-1 flex-col pr-1 pb-[5px]">
          <div className="flex h-[26px] shrink-0 items-start pl-[3px]">
            <div className="-mb-px flex h-[27px] w-[381px] items-center gap-[14px] border border-b-0 border-[#a4aab6] bg-white pl-3">
              <span className="text-xs whitespace-nowrap">· PRODUKCJA MEBLI TWARDYCH: HARMONOGRAM PRODUKCJI ·</span>
              <button aria-label="Zamknij kartę">
                <svg viewBox="0 0 10 8" className="block h-2 w-[10px]" stroke="#4a4e56" strokeWidth="2">
                  <path d="M1 0l8 8M9 0L1 8" />
                </svg>
              </button>
            </div>
            <div className="flex flex-1 items-center justify-end gap-[14px] pt-1 pr-1">
              <Arrow dir="down" />
              <button aria-label="Zamknij">
                <svg viewBox="0 0 10 8" className="block h-2 w-[10px]" stroke="#4a4e56" strokeWidth="2">
                  <path d="M1 0l8 8M9 0L1 8" />
                </svg>
              </button>
            </div>
          </div>
          <div className="flex min-h-0 flex-1 border border-[#a4aab6] bg-white pt-px">
            <LeftPane />
            <div className="w-[3px] shrink-0 bg-[#c0c0c0]" />
            <RightPane />
          </div>
        </div>
      </main>

      <footer className="flex h-5 shrink-0 items-center gap-[3px] border-t border-[#9198a3] bg-[#d4d0c8] font-bold text-black">
        <div className={`w-[152px] justify-center ${foot}`}>2016-04-04,  09:50:33</div>
        <div className={`w-[251px] justify-center ${foot}`}>Nr licencji:  153/5691066210/765</div>
        <div className={`w-[201px] justify-center ${foot}`}>MODUS v. 2.3.0.372 MAX iQ</div>
        <div className={`flex-1 justify-between ${foot}`}>
          Copyright © 2005-2016 RHO Software
          <svg viewBox="0 0 12 12" aria-hidden="true" className="size-3 self-end" stroke="#77736c" strokeWidth="1.500">
            <path d="M0 12L12 0M5 12l7-7M9 12l3-3" />
          </svg>
        </div>
      </footer>
      <Annotations />
    </div>
  );
}
